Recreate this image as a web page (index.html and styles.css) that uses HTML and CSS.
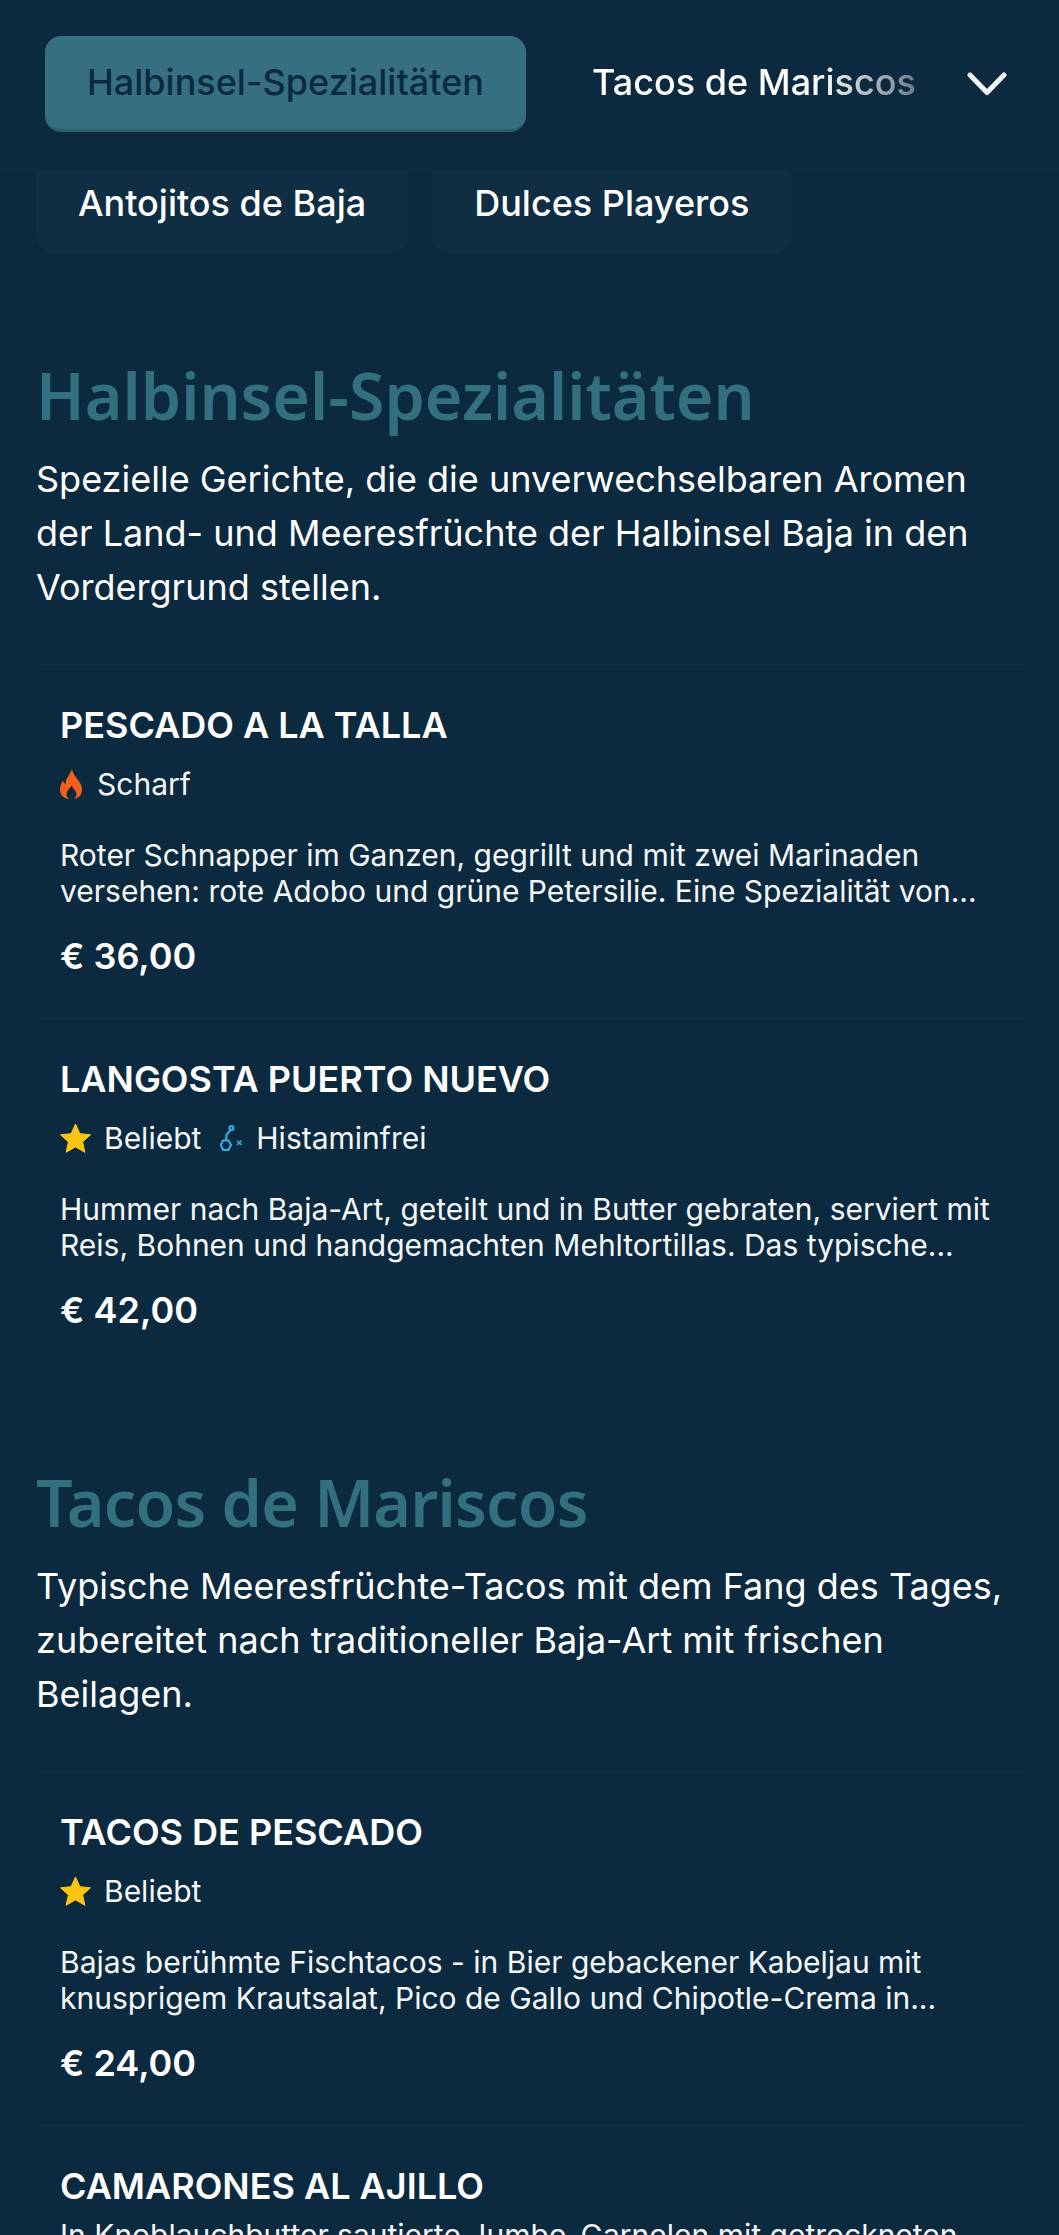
FILE: index.html
```html
<!DOCTYPE html>
<html lang="de">
<head>
<meta charset="utf-8">
<title>Speisekarte</title>
<link rel="stylesheet" href="styles.css">
</head>
<body>
<div class="page">
  <header class="topbar">
    <a class="pill active">Halbinsel-Spezialitäten</a>
    <div class="fade"><a class="pill">Tacos de Mariscos</a></div>
    <svg class="chev" viewBox="0 0 40 24" width="40" height="24"><path d="M3 3 L20 20.500 L37 3" fill="none" stroke="#f2f5f7" stroke-width="5" stroke-linecap="round" stroke-linejoin="round"/></svg>
  </header>
  <nav class="chips">
    <a class="chip">Antojitos de Baja</a>
    <a class="chip">Dulces Playeros</a>
  </nav>
  <main>
    <section class="sec first">
      <h2>Halbinsel-Spezialitäten</h2>
      <p class="lead">Spezielle Gerichte, die die unverwechselbaren Aromen der Land- und Meeresfrüchte der Halbinsel Baja in den Vordergrund stellen.</p>
      <article class="item">
        <h3>PESCADO A LA TALLA</h3>
        <div class="tags">
          <span class="tag"><svg class="ic-flame" viewBox="0 0 22 30"><path fill="#f4601c" fill-rule="evenodd" d="M12 0c1 5 3 7 6 11 2.500 3.500 4 6 4 10 0 5-4 8.500-8 9 1.500-1 2.500-3 2.500-5 0-3-3-5-5-8.500-1.500 3.500-5 5-5 8.500 0 2 1 4 2.500 5C4 29.500 0 26 0 21c0-4 1.500-7 3-9.500 .5 1.500 1.200 2.800 2.500 4C5.500 10 9.500 6 12 0z"/></svg>Scharf</span>
        </div>
        <p class="desc">Roter Schnapper im Ganzen, gegrillt und mit zwei Marinaden versehen: rote Adobo und grüne Petersilie. Eine Spezialität von...</p>
        <div class="price">€ 36,00</div>
      </article>
      <article class="item">
        <h3>LANGOSTA PUERTO NUEVO</h3>
        <div class="tags">
          <span class="tag"><svg class="ic-star" viewBox="0 0 31 30"><path fill="#fdc415" stroke="#fdc415" stroke-width="1" stroke-linejoin="round" d="M15.500 1l4.400 9.700 10.600 1.100-7.900 7.100 2.300 10.400-9.400-5.400-9.400 5.400 2.300-10.400L.5 11.800l10.600-1.100z"/></svg>Beliebt</span>
          <span class="tag"><svg class="ic-mol" viewBox="0 0 23 27"><g fill="none" stroke="#35a8dc" stroke-width="2.200"><circle cx="11.500" cy="3" r="2"/><path d="M10.500 5L6.500 10 6 15"/><path d="M3 15.500h5.500L11 20l-2.500 4.800H3L.8 20z"/></g><path d="M17 15.500l4.500 4.500M21.500 15.500L17 20" stroke="#35a8dc" stroke-width="1.600" fill="none"/></svg>Histaminfrei</span>
        </div>
        <p class="desc">Hummer nach Baja-Art, geteilt und in Butter gebraten, serviert mit Reis, Bohnen und handgemachten Mehltortillas. Das typische...</p>
        <div class="price">€ 42,00</div>
      </article>
    </section>
    <section class="sec">
      <h2 class="tight">Tacos de Mariscos</h2>
      <p class="lead">Typische Meeresfrüchte-Tacos mit dem Fang des Tages, zubereitet nach traditioneller Baja-Art mit frischen Beilagen.</p>
      <article class="item">
        <h3>TACOS DE PESCADO</h3>
        <div class="tags">
          <span class="tag"><svg class="ic-star" viewBox="0 0 31 30"><path fill="#fdc415" stroke="#fdc415" stroke-width="1" stroke-linejoin="round" d="M15.500 1l4.400 9.700 10.600 1.100-7.900 7.100 2.300 10.400-9.400-5.400-9.400 5.400 2.300-10.400L.5 11.800l10.600-1.100z"/></svg>Beliebt</span>
        </div>
        <p class="desc">Bajas berühmte Fischtacos - in Bier gebackener Kabeljau mit knusprigem Krautsalat, Pico de Gallo und Chipotle-Crema in...</p>
        <div class="price">€ 24,00</div>
      </article>
      <article class="item">
        <h3>CAMARONES AL AJILLO</h3>
        <p class="desc nearby">In Knoblauchbutter sautierte Jumbo-Garnelen mit getrockneten Chilis und Limette, dazu Reis und Bohnen.</p>
      </article>
    </section>
  </main>
</div>
</body>
</html>
```
FILE: styles.css
```css
* { box-sizing: border-box; }
html, body { margin: 0; padding: 0; }
body {
  background: #0c2a3f;
  color: #fff;
  font-family: Inter, "Liberation Sans", sans-serif;
}
.page { height: 2235px; overflow: hidden; }
.topbar {
  height: 170px;
  padding: 36px 0 38px 45px;
  display: flex;
  align-items: flex-start;
  border-bottom: 1px solid #0f2e44;
}
.pill {
  display: block;
  font-size: 36px;
  font-weight: 500;
  line-height: 92px;
  height: 96px;
  white-space: nowrap;
}
.pill.active {
  width: 481px;
  text-align: center;
  color: #0c2a3f;
  background: #356f80;
  border-radius: 16px;
  border-bottom: 3px solid #2a5f70;
}
.fade {
  margin-left: 66px;
  width: 323px;
  overflow: hidden;
  -webkit-mask-image: linear-gradient(to right, #000 70%, rgba(0,0,0,.4) 100%);
  mask-image: linear-gradient(to right, #000 70%, rgba(0,0,0,.4) 100%);
}
.chev { margin: 36px 0 0 52px; flex: none; }
.chips {
  display: flex;
  gap: 24px;
  height: 83px;
  padding: 0 36px;
  overflow: hidden;
  align-items: flex-end;
}
.chip {
  height: 120px;
  padding: 50px 42px 0;
  font-size: 36px;
  font-weight: 500;
  line-height: 40px;
  background: #0f2e44;
  border-radius: 16px;
}
main { padding: 0 36px; }
.sec { padding-top: 92px; }
.sec.first { padding-top: 104px; }
h2 {
  margin: 0;
  font-family: "Noto Sans", sans-serif;
  font-size: 64.500px;
  font-weight: 600;
  line-height: 76px;
  color: #33707f;
}
h2.tight { letter-spacing: -0.75px; }
.lead {
  margin: 0;
  padding-top: 19px;
  font-size: 36px;
  line-height: 54px;
  height: 231px;
}
.item { height: 354px; margin-left: 4px; border-top: 1px solid #102f46; padding: 38px 24px 0 20px; }
.sec h3 { margin: 0; font-size: 36px; font-weight: 600; line-height: 44px; }
.tags { display: flex; gap: 19px; margin-top: 16px; height: 42px; }
.tag { display: flex; align-items: center; font-size: 30px; line-height: 42px; color: #f4f7f9; }
.ic-flame { width: 22px; height: 30px; margin-right: 15px; flex: none; }
.ic-star { width: 31px; height: 30px; margin-right: 13px; flex: none; }
.ic-mol { width: 23px; height: 27px; margin-right: 13px; flex: none; }
.desc { margin: 32px 0 0; font-size: 30px; line-height: 36px; color: #f4f7f9; }
.desc.nearby { margin-top: 9px; }
.price { margin-top: 25px; font-size: 36px; font-weight: 600; line-height: 44px; }
```
